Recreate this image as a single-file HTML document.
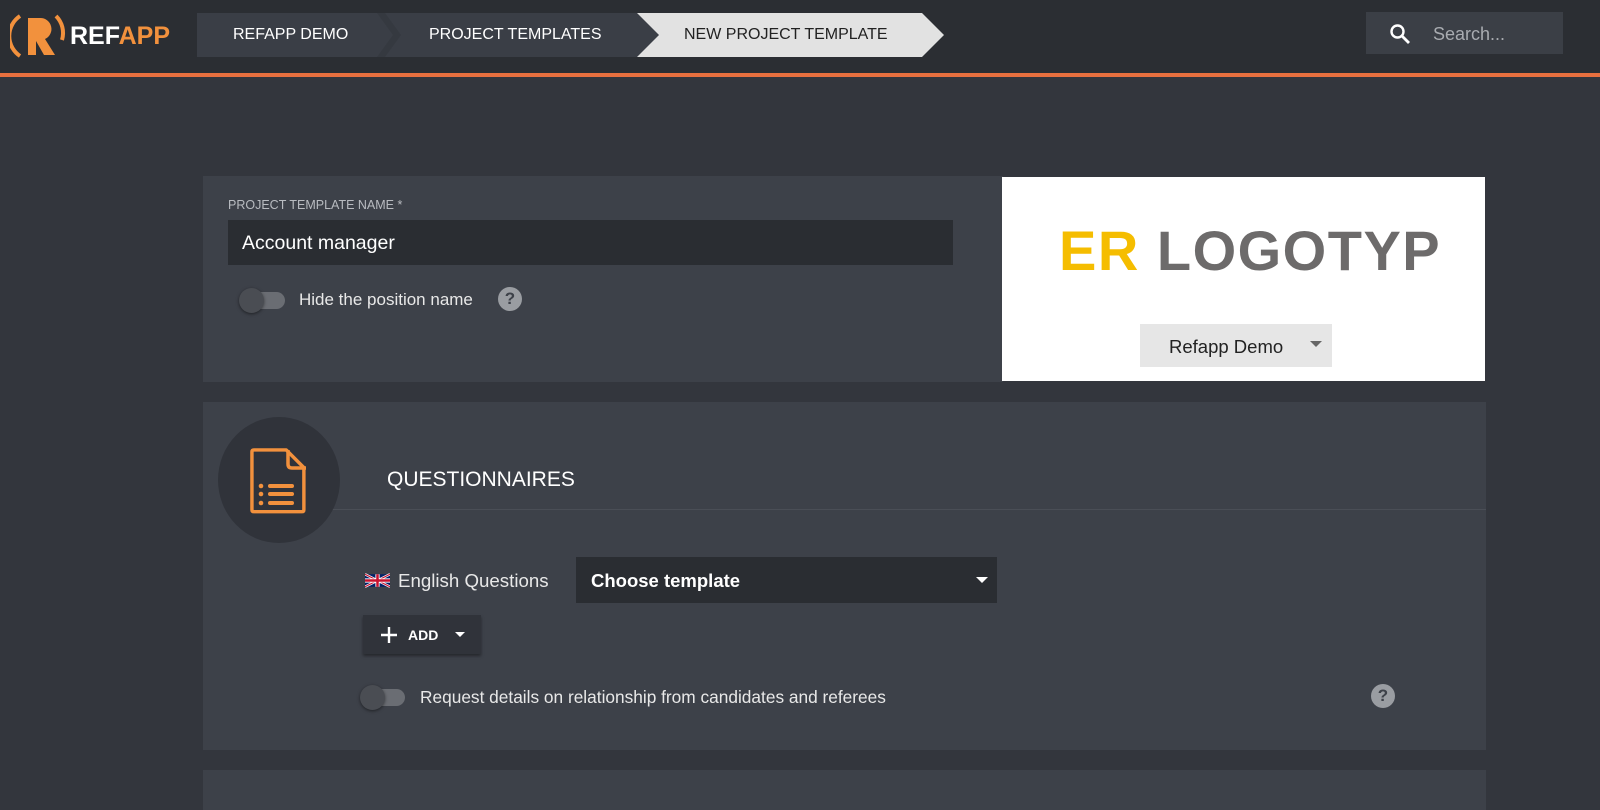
<!DOCTYPE html>
<html><head><meta charset="utf-8"><style>
*{box-sizing:border-box;margin:0;padding:0}
body{width:1600px;height:799px;overflow:hidden;background:#33363d;font-family:"Liberation Sans",sans-serif;color:#fff;position:relative}
.hdr{position:absolute;left:0;top:0;width:1600px;height:73px;background:#2b2e33}
.line{position:absolute;left:0;top:73px;width:1600px;height:4px;background:#e8703f}
.abs{position:absolute}
.card{position:absolute;background:#3d4149}
.t{position:absolute;white-space:nowrap}
</style></head><body>
<div class="hdr"></div><div class="line"></div>
<svg class="abs" style="left:10px;top:10px" width="60" height="52" viewBox="0 0 60 52">
<path d="M10 6 A24 24 0 0 0 10 46" stroke="#f2913d" stroke-width="4" fill="none"/>
<path d="M18 8 h12 a11 11 0 0 1 5 21 l10 16 h-11 l-8 -14 v14 h-8z" fill="#f2913d"/>
<path d="M46 6 A24 24 0 0 1 52 30" stroke="#f2913d" stroke-width="4" fill="none"/>
</svg>
<div class="t" style="left:70px;top:22px;font-size:25px;font-weight:bold"><span style="color:#fff">REF</span><span style="color:#f2913d">APP</span></div>
<svg class="abs" style="left:197px;top:13px" width="750" height="45">
<polygon points="0,0 440,0 462,22 440,44 0,44" fill="#3a3e46"/>
<polygon points="180,0 196,22 180,44 188,44 204,22 188,0" fill="#353940"/>
<polygon points="440,0 725,0 747,22 725,44 440,44 462,22" fill="#e2e2e2"/>
</svg>
<div class="t" style="left:233px;top:26px;font-size:16px">REFAPP DEMO</div>
<div class="t" style="left:429px;top:26px;font-size:16px">PROJECT TEMPLATES</div>
<div class="t" style="left:684px;top:26px;font-size:16px;color:#222">NEW PROJECT TEMPLATE</div>
<div class="abs" style="left:1366px;top:12px;width:197px;height:42px;background:#3b3f46"></div>
<svg class="abs" style="left:1388px;top:22px" width="24" height="24" viewBox="0 0 24 24"><circle cx="9.5" cy="9.5" r="6" stroke="#fff" stroke-width="2.4" fill="none"/><path d="M14 14l7 7" stroke="#fff" stroke-width="2.8"/></svg>
<div class="t" style="left:1433px;top:24px;font-size:18px;color:#a8abb0">Search...</div>
<div class="card" style="left:203px;top:176px;width:800px;height:206px"></div>
<div class="t" style="left:228px;top:198px;font-size:12.5px;color:#b8bbc0">PROJECT TEMPLATE NAME *</div>
<div class="abs" style="left:228px;top:220px;width:725px;height:45px;background:#2a2d32"></div>
<div class="t" style="left:242px;top:232px;font-size:19.5px">Account manager</div>
<div class="abs" style="left:244px;top:292px;width:41px;height:17px;border-radius:9px;background:#6a6d73"></div>
<div class="abs" style="left:239px;top:288px;width:25px;height:25px;border-radius:50%;background:#4a4d53;box-shadow:0 1px 3px rgba(0,0,0,.5)"></div>
<div class="t" style="left:299px;top:290px;font-size:17px;color:#e8e8e8">Hide the position name</div>
<div class="abs" style="left:498px;top:287px;width:24px;height:24px;border-radius:50%;background:#9a9da2;color:#3d4149;font-weight:bold;font-size:17px;text-align:center;line-height:24px">?</div>
<div class="abs" style="left:1002px;top:177px;width:483px;height:204px;background:#fff"></div>
<div class="t" style="left:1059px;top:218px;font-size:56px;font-weight:bold;letter-spacing:1.5px"><span style="color:#f5bd00">ER</span> <span style="color:#6d6b6b">LOGOTYP</span></div>
<div class="abs" style="left:1140px;top:324px;width:192px;height:43px;background:#e6e6e6"></div>
<div class="t" style="left:1169px;top:336px;font-size:18.5px;color:#222">Refapp Demo</div>
<svg class="abs" style="left:1310px;top:341px" width="12" height="6"><polygon points="0,0 12,0 6,6" fill="#666"/></svg>
<div class="card" style="left:203px;top:402px;width:1283px;height:348px"></div>
<div class="abs" style="left:330px;top:509px;width:1156px;height:1px;background:#4a4e56"></div>
<div class="abs" style="left:218px;top:417px;width:122px;height:126px;border-radius:50%;background:#30333a"></div>
<svg class="abs" style="left:250px;top:448px" width="60" height="68" viewBox="0 0 60 68">
<path d="M3 4 q0-2 2-2 h33 l18 18 v43 q0 2-2 2 h-49 q-2 0-2-2z" transform="translate(-1,0) scale(.98)" fill="none" stroke="#f2913d" stroke-width="3.5" stroke-linejoin="round"/>
<path d="M38 2 v14 q0 4 4 4 h14" fill="none" stroke="#f2913d" stroke-width="3.5"/>
<g fill="#f2913d"><circle cx="11" cy="38" r="2.3"/><circle cx="11" cy="46" r="2.3"/><circle cx="11" cy="55" r="2.3"/>
<rect x="18" y="36" width="26" height="4" rx="2"/><rect x="18" y="44" width="26" height="4" rx="2"/><rect x="18" y="53" width="26" height="4" rx="2"/></g>
</svg>
<div class="t" style="left:387px;top:468px;font-size:21px">QUESTIONNAIRES</div>
<svg class="abs" style="left:365px;top:572px" width="25" height="17" viewBox="0 0 60 30"><rect width="60" height="30" fill="#012169"/><path d="M0 0L60 30M60 0L0 30" stroke="#fff" stroke-width="6"/><path d="M0 0L60 30M60 0L0 30" stroke="#C8102E" stroke-width="2.5"/><path d="M30 0v30M0 15h60" stroke="#fff" stroke-width="10"/><path d="M30 0v30M0 15h60" stroke="#C8102E" stroke-width="6"/></svg>
<div class="t" style="left:398px;top:570px;font-size:18.7px;color:#e8e8e8">English Questions</div>
<div class="abs" style="left:576px;top:557px;width:421px;height:46px;background:#2a2d32"></div>
<div class="t" style="left:591px;top:570px;font-size:18.5px;font-weight:bold">Choose template</div>
<svg class="abs" style="left:976px;top:577px" width="12" height="6"><polygon points="0,0 12,0 6,6" fill="#fff"/></svg>
<div class="abs" style="left:363px;top:615px;width:118px;height:39px;background:#30333a;box-shadow:0 2px 3px rgba(0,0,0,.4)"></div>
<svg class="abs" style="left:380px;top:626px" width="18" height="18"><path d="M9 1v16M1 9h16" stroke="#fff" stroke-width="2.4"/></svg>
<div class="t" style="left:408px;top:627px;font-size:14px;font-weight:bold">ADD</div>
<svg class="abs" style="left:455px;top:632px" width="10" height="5"><polygon points="0,0 10,0 5,5" fill="#fff"/></svg>
<div class="abs" style="left:364px;top:689px;width:41px;height:17px;border-radius:9px;background:#6a6d73"></div>
<div class="abs" style="left:360px;top:685px;width:25px;height:25px;border-radius:50%;background:#4a4d53;box-shadow:0 1px 3px rgba(0,0,0,.5)"></div>
<div class="t" style="left:420px;top:687px;font-size:17.3px;color:#e8e8e8">Request details on relationship from candidates and referees</div>
<div class="abs" style="left:1371px;top:684px;width:24px;height:24px;border-radius:50%;background:#9a9da2;color:#3d4149;font-weight:bold;font-size:17px;text-align:center;line-height:24px">?</div>
<div class="card" style="left:203px;top:770px;width:1283px;height:40px"></div>
</body></html>
